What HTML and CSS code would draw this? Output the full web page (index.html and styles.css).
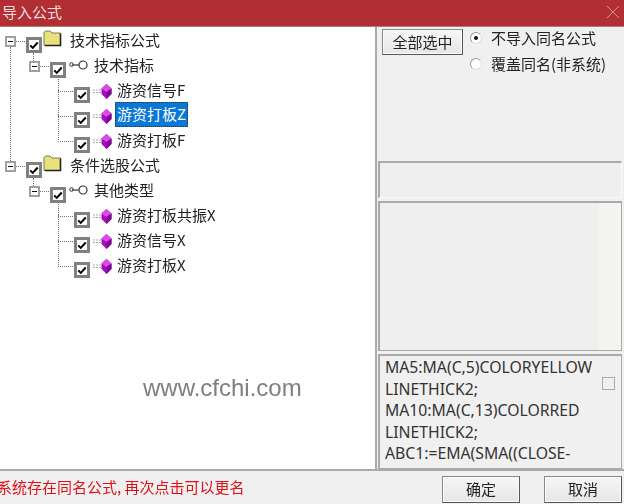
FILE: index.html
```html
<!DOCTYPE html>
<html lang="zh">
<head>
<meta charset="utf-8">
<title>导入公式</title>
<link rel="stylesheet" href="styles.css">
</head>
<body>
<div class="window">
  <header class="titlebar">
    <span class="title">导入公式</span>
    <svg class="close" width="14" height="14" viewBox="0 0 14 14"><path d="M1 1L13 13M13 1L1 13" stroke="#d98d90" stroke-width="1" fill="none"/></svg>
  </header>
  <div class="main">
    <div class="tree">
      <div class="row level0 has-down">
        <span class="exp"></span><span class="cb"><svg viewBox="0 0 12 12"><path d="M1.5 6.5L4.5 9.5L10.5 3" class="tick"/></svg></span>
        <svg class="folder" width="19" height="17" viewBox="0 0 19 17"><path d="M1 4V2.500L2.500 1H7L9 3H17.500V15.500H1Z" fill="#e8e27c" stroke="#7d7a4a"/><path d="M17.500 3.500V15.500H2" stroke="#222" stroke-width="1.600" fill="none"/></svg>
        <span class="label">技术指标公式</span>
      </div>
      <div class="row level1">
        <span class="exp"></span><span class="cb"><svg viewBox="0 0 12 12"><path d="M1.5 6.5L4.5 9.5L10.5 3" class="tick"/></svg></span>
        <svg class="key" width="19" height="10" viewBox="0 0 19 10"><circle cx="14" cy="5" r="4" fill="#fff" stroke="#333" stroke-width="1.200"/><path d="M10 5H3" stroke="#333" stroke-width="1.200" fill="none"/><circle cx="2.500" cy="4.500" r="1.800" fill="none" stroke="#333"/></svg>
        <span class="label">技术指标</span>
      </div>
      <div class="row level2">
        <span class="cb"><svg viewBox="0 0 12 12"><path d="M1.5 6.5L4.5 9.5L10.5 3" class="tick"/></svg></span>
        <svg class="gem" width="19" height="15" viewBox="0 0 19 15"><path d="M0 6H8M0 8.500H8" stroke="#aaa" stroke-dasharray="2 1"/><path d="M13.500 0L18.500 4.500V10L13.500 15L8.500 10V4.500Z" fill="#a80cc0"/><path d="M8.500 4.500L13.500 8L18.500 4.500L13.500 0Z" fill="#d94ae8"/><path d="M13.500 8V15L18.500 10V4.500Z" fill="#7d0a90"/></svg>
        <span class="label">游资信号F</span>
      </div>
      <div class="row level2">
        <span class="cb"><svg viewBox="0 0 12 12"><path d="M1.5 6.5L4.5 9.5L10.5 3" class="tick"/></svg></span>
        <svg class="gem" width="19" height="15" viewBox="0 0 19 15"><path d="M0 6H8M0 8.500H8" stroke="#aaa" stroke-dasharray="2 1"/><path d="M13.500 0L18.500 4.500V10L13.500 15L8.500 10V4.500Z" fill="#a80cc0"/><path d="M8.500 4.500L13.500 8L18.500 4.500L13.500 0Z" fill="#d94ae8"/><path d="M13.500 8V15L18.500 10V4.500Z" fill="#7d0a90"/></svg>
        <span class="label selected">游资打板Z</span>
      </div>
      <div class="row level2 last">
        <span class="cb"><svg viewBox="0 0 12 12"><path d="M1.5 6.5L4.5 9.5L10.5 3" class="tick"/></svg></span>
        <svg class="gem" width="19" height="15" viewBox="0 0 19 15"><path d="M0 6H8M0 8.500H8" stroke="#aaa" stroke-dasharray="2 1"/><path d="M13.500 0L18.500 4.500V10L13.500 15L8.500 10V4.500Z" fill="#a80cc0"/><path d="M8.500 4.500L13.500 8L18.500 4.500L13.500 0Z" fill="#d94ae8"/><path d="M13.500 8V15L18.500 10V4.500Z" fill="#7d0a90"/></svg>
        <span class="label">游资打板F</span>
      </div>
      <div class="row level0">
        <span class="exp"></span><span class="cb"><svg viewBox="0 0 12 12"><path d="M1.5 6.5L4.5 9.5L10.5 3" class="tick"/></svg></span>
        <svg class="folder" width="19" height="17" viewBox="0 0 19 17"><path d="M1 4V2.500L2.500 1H7L9 3H17.500V15.500H1Z" fill="#e8e27c" stroke="#7d7a4a"/><path d="M17.500 3.500V15.500H2" stroke="#222" stroke-width="1.600" fill="none"/></svg>
        <span class="label">条件选股公式</span>
      </div>
      <div class="row level1">
        <span class="exp"></span><span class="cb"><svg viewBox="0 0 12 12"><path d="M1.5 6.5L4.5 9.5L10.5 3" class="tick"/></svg></span>
        <svg class="key" width="19" height="10" viewBox="0 0 19 10"><circle cx="14" cy="5" r="4" fill="#fff" stroke="#333" stroke-width="1.200"/><path d="M10 5H3" stroke="#333" stroke-width="1.200" fill="none"/><circle cx="2.500" cy="4.500" r="1.800" fill="none" stroke="#333"/></svg>
        <span class="label">其他类型</span>
      </div>
      <div class="row level2">
        <span class="cb"><svg viewBox="0 0 12 12"><path d="M1.5 6.5L4.5 9.5L10.5 3" class="tick"/></svg></span>
        <svg class="gem" width="19" height="15" viewBox="0 0 19 15"><path d="M0 6H8M0 8.500H8" stroke="#aaa" stroke-dasharray="2 1"/><path d="M13.500 0L18.500 4.500V10L13.500 15L8.500 10V4.500Z" fill="#a80cc0"/><path d="M8.500 4.500L13.500 8L18.500 4.500L13.500 0Z" fill="#d94ae8"/><path d="M13.500 8V15L18.500 10V4.500Z" fill="#7d0a90"/></svg>
        <span class="label">游资打板共振X</span>
      </div>
      <div class="row level2">
        <span class="cb"><svg viewBox="0 0 12 12"><path d="M1.5 6.5L4.5 9.5L10.5 3" class="tick"/></svg></span>
        <svg class="gem" width="19" height="15" viewBox="0 0 19 15"><path d="M0 6H8M0 8.500H8" stroke="#aaa" stroke-dasharray="2 1"/><path d="M13.500 0L18.500 4.500V10L13.500 15L8.500 10V4.500Z" fill="#a80cc0"/><path d="M8.500 4.500L13.500 8L18.500 4.500L13.500 0Z" fill="#d94ae8"/><path d="M13.500 8V15L18.500 10V4.500Z" fill="#7d0a90"/></svg>
        <span class="label">游资信号X</span>
      </div>
      <div class="row level2 last">
        <span class="cb"><svg viewBox="0 0 12 12"><path d="M1.5 6.5L4.5 9.5L10.5 3" class="tick"/></svg></span>
        <svg class="gem" width="19" height="15" viewBox="0 0 19 15"><path d="M0 6H8M0 8.500H8" stroke="#aaa" stroke-dasharray="2 1"/><path d="M13.500 0L18.500 4.500V10L13.500 15L8.500 10V4.500Z" fill="#a80cc0"/><path d="M8.500 4.500L13.500 8L18.500 4.500L13.500 0Z" fill="#d94ae8"/><path d="M13.500 8V15L18.500 10V4.500Z" fill="#7d0a90"/></svg>
        <span class="label">游资打板X</span>
      </div>
      <div class="watermark">www.cfchi.com</div>
    </div>
    <aside class="side">
      <div class="options">
        <button class="btn select-all">全部选中</button>
        <div class="radios">
          <label class="radio"><span class="dot on"></span>不导入同名公式</label>
          <label class="radio"><span class="dot"></span>覆盖同名(非系统)</label>
        </div>
      </div>
      <div class="field"></div>
      <div class="listbox"><div class="strip"></div></div>
      <div class="formula">
        <div class="code">MA5:MA(C,5)COLORYELLOW<br>LINETHICK2;<br>MA10:MA(C,13)COLORRED<br>LINETHICK2;<br>ABC1:=EMA(SMA((CLOSE-</div>
        <span class="small-check"></span>
      </div>
    </aside>
  </div>
  <footer class="footer">
    <span class="message">系统存在同名公式, 再次点击可以更名</span>
    <div class="actions">
      <button class="btn action">确定</button>
      <button class="btn action">取消</button>
    </div>
  </footer>
</div>
</body>
</html>
```
FILE: styles.css
```css
* { box-sizing: border-box; }
html, body { margin: 0; padding: 0; }
body {
  width: 624px;
  height: 504px;
  overflow: hidden;
  font-family: "Noto Sans CJK SC", "Noto Sans", sans-serif;
  background: #f0f0f0;
  color: #222;
}
.window { width: 624px; height: 504px; display: flex; flex-direction: column; filter: blur(0.4px); }
.titlebar {
  height: 27px;
  flex: none;
  background: #b02e34;
  border-bottom: 1px solid #b9777a;
  display: flex;
  align-items: center;
  justify-content: space-between;
  padding: 0 4px 2px 2px;
}
.title { color: #f4dcdc; font-size: 15px; line-height: 20px; }
.close { display: block; }
.main { height: 444px; flex: none; display: flex; border-bottom: 2px solid #a9a9a9; }
.tree {
  position: relative;
  width: 377px;
  flex: none;
  background: #fff;
  border-right: 2px solid #a9a9a9;
  padding-top: 1px;
}
.row {
  position: relative;
  height: 25px;
  display: flex;
  align-items: center;
  font-size: 15px;
}
.level0 { padding-left: 5px; }
.level1 { padding-left: 29px; }
.level2 { padding-left: 74px; }
.exp {
  position: relative;
  width: 11px;
  height: 11px;
  flex: none;
  border: 2px solid #a0a0a0;
  background: #fff;
  margin-right: 10px;
  top: 1px;
  z-index: 1;
}
.exp::after { content: ""; position: absolute; left: 1px; right: 1px; top: 3px; height: 1px; background: #111; }
.exp::before {
  content: "";
  position: absolute;
  left: 9px;
  top: 3px;
  width: 11px;
  border-top: 1px dotted #777;
}
.cb {
  position: relative;
  width: 16px;
  height: 16px;
  flex: none;
  border: 3px solid #808080;
  background: #fff;
  top: 4px;
  z-index: 1;
}
.cb svg { display: block; width: 10px; height: 10px; }
.tick { fill: none; stroke: #000; stroke-width: 2.4; }
.level2::before {
  content: "";
  position: absolute;
  left: 58px;
  top: -3px;
  height: 16px;
  width: 16px;
  border-left: 1px dotted #777;
  border-bottom: 1px dotted #777;
}
.level2::after {
  content: "";
  position: absolute;
  left: 58px;
  top: 12px;
  height: 13px;
  border-left: 1px dotted #777;
}
.level2.last::after { display: none; }
.level1::before {
  content: "";
  position: absolute;
  left: 33px;
  top: 0;
  height: 10px;
  border-left: 1px dotted #777;
}
.level1 + .level2::before { top: -5px; height: 18px; }
.has-down::after {
  content: "";
  position: absolute;
  left: 10px;
  top: 19px;
  height: 114px;
  border-left: 1px dotted #777;
}
.folder { flex: none; margin: -5px 7px 0 1px; }
.key { flex: none; margin: -2px 5px 0 3px; }
.gem { flex: none; margin: 1px 4px 0 3px; }
.label { line-height: 24px; padding: 0 1px; position: relative; white-space: nowrap; top: -1px; }
.selected {
  background: #0a78d7;
  color: #fff;
  outline: 1px dotted #333;
  outline-offset: -1px;
  margin-left: -1px;
  padding: 0 2px;
  height: 25px;
}
.watermark {
  position: absolute;
  left: 143px;
  top: 347px;
  font-family: "Liberation Sans", sans-serif;
  font-size: 24px;
  line-height: 28px;
  color: #7f7f7f;
}
.side { flex: 1; display: flex; flex-direction: column; padding: 2px 2px 0 1px; }
.options { height: 132px; display: flex; align-items: flex-start; padding-left: 4px; }
.btn {
  font-family: inherit;
  font-size: 15px;
  color: #222;
  background: linear-gradient(#f6f6f6, #e6e6e6);
  border: 1px solid #8a8a86;
  border-right-color: #555;
  border-bottom-color: #555;
  box-shadow: inset 0 0 0 1px #fbfbfb;
  padding: 0;
  line-height: 20px;
}
.select-all { width: 81px; height: 26px; }
.radios { margin: -2px 0 0 7px; display: flex; flex-direction: column; gap: 5px; }
.radio { display: flex; align-items: center; font-size: 15px; height: 21px; white-space: nowrap; }
.dot {
  position: relative;
  width: 12px;
  height: 12px;
  border-radius: 50%;
  background: #fff;
  border: 1px solid #9a9a9a;
  border-right-color: #ddd;
  border-bottom-color: #ddd;
  margin-right: 9px;
  flex: none;
}
.dot.on::after { content: ""; position: absolute; left: 3px; top: 3px; width: 4px; height: 4px; border-radius: 50%; background: #111; }
.field {
  height: 37px;
  flex: none;
  border: 1px solid #fafafa;
  border-top: 2px solid #aaa;
  border-left: 2px solid #aaa;
  background: #efefef;
}
.listbox {
  height: 150px;
  flex: none;
  margin-top: 3px;
  border: 1px solid #aaa;
  border-top-width: 2px;
  border-left-width: 2px;
  background: #efefef;
  display: flex;
  justify-content: flex-end;
}
.strip { width: 22px; background: #f5f4f1; }
.formula {
  flex: 1;
  margin-top: 3px;
  border: 1px solid #aaa;
  border-top-width: 2px;
  border-left-width: 2px;
  background: #f0f0f0;
  position: relative;
  padding: 1px 0 0 5px;
}
.code { font-size: 15.75px; line-height: 21.5px; white-space: nowrap; color: #333; font-family: "Noto Sans", sans-serif; }
.small-check {
  position: absolute;
  left: 222px;
  top: 21px;
  width: 13px;
  height: 13px;
  border: 1px solid #aaa;
}
.footer { flex: 1; display: flex; align-items: center; justify-content: space-between; padding: 0 2px 0 0; }
.message { color: #e01018; font-size: 15px; margin-left: -3px; white-space: nowrap; margin-top: -3px; }
.actions { display: flex; gap: 24px; margin-top: 3px; }
.action { width: 78px; height: 27px; }
```
